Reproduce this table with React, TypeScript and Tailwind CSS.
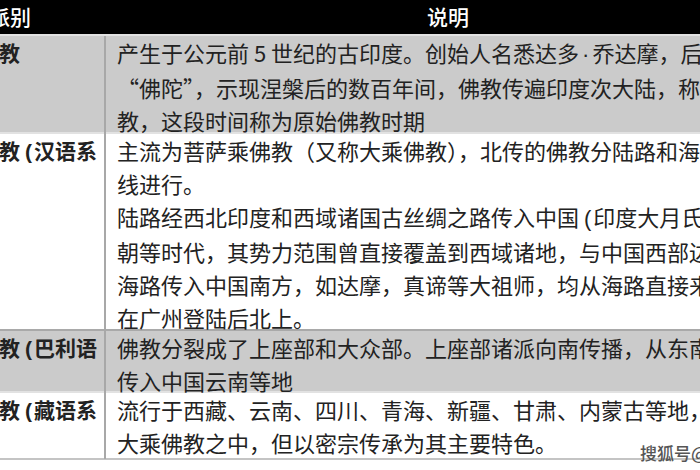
const P = ({ children }: { children: string }) => (
  <span className="ml-[5px] mr-[2px] font-['Liberation_Sans',sans-serif]">{children}</span>
)

const rows = [
  {
    name: <>佛教</>,
    bg: 'bg-[#cbcbcb]',
    h: 'h-[98px]',
    lines: [
      <>
        产生于公元前 5 世纪的古印度。创始人名悉达多
        <span className="mx-[3px] font-['Liberation_Sans',sans-serif]">·</span>乔达摩，后世尊称
      </>,
      <>“佛陀”，示现涅槃后的数百年间，佛教传遍印度次大陆，称为</>,
      <>教，这段时间称为原始佛教时期</>,
    ],
  },
  {
    name: (
      <>
        佛教<P>(</P>汉语系
      </>
    ),
    bg: 'bg-white',
    h: 'h-[197px]',
    lines: [
      <>主流为菩萨乘佛教（又称大乘佛教），北传的佛教分陆路和海路</>,
      <>线进行。</>,
      <>
        陆路经西北印度和西域诸国古丝绸之路传入中国<P>(</P>印度大月氏
      </>,
      <>朝等时代，其势力范围曾直接覆盖到西域诸地，与中国西部边境</>,
      <>海路传入中国南方，如达摩，真谛等大祖师，均从海路直接来</>,
      <>在广州登陆后北上。</>,
    ],
  },
  {
    name: (
      <>
        佛教<P>(</P>巴利语
      </>
    ),
    bg: 'bg-[#cbcbcb]',
    h: 'h-[62px]',
    lines: [<>佛教分裂成了上座部和大众部。上座部诸派向南传播，从东南亚</>, <>传入中国云南等地</>],
  },
  {
    name: (
      <>
        佛教<P>(</P>藏语系
      </>
    ),
    bg: 'bg-white',
    h: 'h-[67px]',
    lines: [<>流行于西藏、云南、四川、青海、新疆、甘肃、内蒙古等地，属</>, <>大乘佛教之中，但以密宗传承为其主要特色。</>],
  },
]

export default function App() {
  return (
    <div className="relative h-[470px] w-[700px] overflow-hidden bg-white font-['Noto_Sans_CJK_SC','Noto_Sans',sans-serif] text-[#222]">
      <div className="w-[790px]">
        <div className="grid h-[34px] grid-cols-[106px_1fr] items-center bg-black text-[21px] font-medium text-white">
          <div className="overflow-hidden whitespace-nowrap">
            <span className="ml-[-11px] inline-block">派别</span>
          </div>
          <div className="text-center">说明</div>
        </div>
        {rows.map((row, i) => (
          <div
            key={i}
            className={`grid grid-cols-[106px_1fr] border-t-2 ${i === 2 ? 'border-[#a9a9a9]' : 'border-[#e2e2e2]'} ${row.bg} ${row.h}`}
          >
            <div className="overflow-hidden whitespace-nowrap border-r-2 border-[#a8a8a8] text-[21px] font-bold leading-[33px]">
              <span className="ml-[-22px] inline-block">{row.name}</span>
            </div>
            <div className="whitespace-nowrap pl-[11px] text-[22px] leading-[33px]">
              {row.lines.map((l, j) => (
                <div key={j}>{l}</div>
              ))}
            </div>
          </div>
        ))}
        <div className="h-[2px] bg-[#c4c4c4]" />
      </div>
      <div className="absolute left-[640px] top-[440px] whitespace-nowrap text-[17px] font-medium text-[#555]">
        搜狐号@佛学文化
      </div>
    </div>
  )
}
